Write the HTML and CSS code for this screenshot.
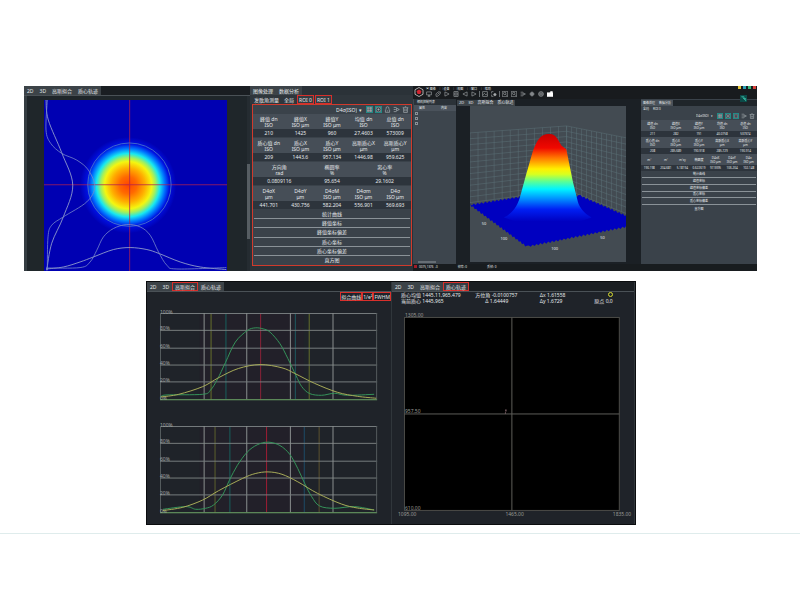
FILE: index.html
```
<!DOCTYPE html>
<html lang="zh-CN">
<head>
<meta charset="utf-8">
<meta name="viewport" content="width=device-width, initial-scale=1">
<title>光束分析</title>
<link rel="stylesheet" href="styles.css">
</head>
<body>
<svg class="defs" aria-hidden="true">
  <symbol id="i-grid" viewBox="0 0 10 10"><rect x="1.5" y="1.5" width="7" height="7"/><path d="M1.5 4h7M1.5 6.5h7M4 1.5v7M6.5 1.5v7"/></symbol>
  <symbol id="i-target" viewBox="0 0 10 10"><circle cx="5" cy="5" r="3.7"/><circle cx="5" cy="5" r="1" fill="currentColor"/></symbol>
  <symbol id="i-lock" viewBox="0 0 10 10"><path d="M3 5V3a2 2 0 0 1 4 0v2M2 5v4h6V5M4 7h2"/></symbol>
  <symbol id="i-export" viewBox="0 0 10 10"><path d="M1 2h4M1 5h3M1 8h4M5 3l4 2-4 2z"/></symbol>
  <symbol id="i-trash" viewBox="0 0 10 10"><path d="M1 2.5h8M4 1h2M2.3 2.5v6.7h5.4V2.5M4 4.5v3M6 4.5v3"/></symbol>
  <symbol id="i-screen" viewBox="0 0 10 10"><path d="M1 1.5h8v5H1zM5 6.5L3.5 9h3z"/></symbol>
  <symbol id="i-link" viewBox="0 0 10 10"><path d="M2 9L1.5 5 5 1.5h4L8.500 5 5 8.500zM4 6l3-3"/></symbol>
  <symbol id="i-play" viewBox="0 0 10 10"><path d="M1.500 1.500l7 3.500-7 3.500z"/></symbol>
  <symbol id="i-pause" viewBox="0 0 10 10"><path d="M1.500 1h7v8h-7zM5 1v8M3 3v4M7 3v4"/></symbol>
  <symbol id="i-back" viewBox="0 0 10 10"><path d="M8.500 1.500L1.500 5l7 3.500z"/></symbol>
  <symbol id="i-image" viewBox="0 0 10 10"><path d="M1 1h8v8H1zM1 7l3-3 2 2 1-1 2 2"/></symbol>
  <symbol id="i-corner" viewBox="0 0 10 10"><path d="M1 4V1h3M1 6v3h3"/><circle cx="6.500" cy="6" r="2" fill="currentColor"/></symbol>
  <symbol id="i-search" viewBox="0 0 10 10"><path d="M.5.500h9v9h-9z"/><circle cx="4.500" cy="4" r="2"/><path d="M6 5.500L8.500 8"/></symbol>
  <symbol id="i-gear" viewBox="0 0 10 10"><circle cx="5" cy="5" r="3"/><circle cx="5" cy="5" r="1.200"/><path d="M5 1v8M1 5h8"/></symbol>
  <symbol id="i-globe" viewBox="0 0 10 10"><circle cx="5" cy="5" r="4"/><path d="M3.500 1.500v7M6.500 1.500v7M1 5h8"/></symbol>
  <symbol id="i-camera" viewBox="0 0 10 10"><path d="M0 3h5l1-2h3v2l1 0v6H0z" fill="currentColor"/></symbol>
</svg>

<main>
<section class="row top">
  <article class="panel">
    <div class="bar"><nav class="tabs"><button>2D</button><button>3D</button><button>高斯拟合</button><button>质心轨迹</button></nav></div>
    <div class="beam">
      <svg viewBox="0 0 183 171" role="img" aria-label="光斑">
        <defs>
          <radialGradient id="heat" gradientUnits="userSpaceOnUse" cx="84" cy="85" r="48">
            <stop offset="0" stop-color="#ff4600"/><stop offset=".18" stop-color="#ff6a00"/><stop offset=".35" stop-color="#ffae00"/>
            <stop offset=".49" stop-color="#f4f610"/><stop offset=".57" stop-color="#a0f060"/><stop offset=".66" stop-color="#18e8f0"/>
            <stop offset=".76" stop-color="#0078ff"/><stop offset=".86" stop-color="#0010e0"/><stop offset="1" stop-color="#0000b2"/>
          </radialGradient>
        </defs>
        <rect width="183" height="171" fill="#0000b2"/>
        <circle cx="84" cy="85" r="48" fill="url(#heat)"/>
        <path d="M0 84.500H183M85.500 0V171" stroke="#b02050" stroke-width="1" opacity=".75"/>
        <g fill="none" stroke="#7686cc" stroke-width=".8">
          <circle cx="85.300" cy="84.500" r="41.600" stroke="#4e7cc8"/>
          <path stroke="#a0aed0" data-curve="2,0 4.3,20 17.7,52.7 28.7,85 19.3,116.7 7.7,143 2.7,170"/>
          <path data-curve="3.3,0 2,30 6.7,43.3 17.7,53.3 32.7,60 44.3,70 50.7,86.7 42.7,101.7 19.3,116.7 7.7,125 4,136.7 3.3,170"/>
          <path stroke="#a0aed0" data-curve="2,168.7 19.3,166.7 36,161.7 49.3,156.7 69.3,149.3 86,147.3 102.7,149.3 115,153.3 136,161.7 156,166.7 182,169.3"/>
          <path data-curve="2,167.7 36,167.3 46,161.7 52.7,150 59.3,136.7 69.3,128.3 82.7,124.3 96,126.7 106,135 114.3,151.7 122.7,165 132.7,168.7 182,167.3"/>
        </g>
      </svg>
      <i class="scroll"></i>
    </div>
  </article>

  <article class="panel data">
    <nav class="tabs"><button>图像处理</button><button>数据分析</button></nav>
    <nav class="tabs sub"><button>发散角测量</button><button>全局</button><button class="hot">ROI 0</button><button class="hot">ROI 1</button></nav>
    <div class="results framed">
      <div class="tools"><select aria-label="标准"><option>D4σ(ISO)</option></select><span class="caret">▾</span>
        <button class="on" aria-label="表格"><svg><use href="#i-grid"/></svg></button><button class="on" aria-label="定位"><svg><use href="#i-target"/></svg></button><button aria-label="锁定"><svg><use href="#i-lock"/></svg></button><button aria-label="导出"><svg><use href="#i-export"/></svg></button><button aria-label="删除"><svg><use href="#i-trash"/></svg></button></div>
      <table><thead><tr><th>峰值 dn<br>ISO</th><th>峰值X<br>ISO μm</th><th>峰值Y<br>ISO μm</th><th>均值 dn<br>ISO</th><th>总值 dn<br>ISO</th></tr></thead><tbody><tr><td>210</td><td>1425</td><td>960</td><td>27.4603</td><td>573009</td></tr></tbody></table>
      <table><thead><tr><th>质心值 dn<br>ISO</th><th>质心X<br>ISO μm</th><th>质心Y<br>ISO μm</th><th>高斯质心X<br>μm</th><th>高斯质心Y<br>μm</th></tr></thead><tbody><tr><td>209</td><td>1443.6</td><td>957.134</td><td>1446.98</td><td>959.625</td></tr></tbody></table>
      <table><thead><tr><th>方向角<br>rad</th><th>椭圆率<br>%</th><th>离心率<br>%</th></tr></thead><tbody><tr><td>0.0809116</td><td>95.654</td><td>29.1602</td></tr></tbody></table>
      <table><thead><tr><th>D4σX<br>μm</th><th>D4σY<br>μm</th><th>D4σM<br>ISO μm</th><th>D4σm<br>ISO μm</th><th>D4σ<br>ISO μm</th></tr></thead><tbody><tr><td>441.701</td><td>430.756</td><td>582.204</td><td>556.901</td><td>569.693</td></tr></tbody></table>
      <div class="list"><button>统计曲线</button><button>峰值坐标</button><button>峰值坐标偏差</button><button>质心坐标</button><button>质心坐标偏差</button><button>直方图</button></div>
    </div>
  </article>

  <article class="panel app">
    <header class="apphead">
      <svg class="logo" viewBox="0 0 10 10"><path d="M5 .5l4 2.200v4.600L5 9.500 1 7.300V2.700z" fill="#151719" stroke="#d8d0d0" stroke-width=".8"/><path d="M5 2.500L7.500 4 6.500 7h-3L2.500 4z" fill="#d02430"/></svg>
      <div class="headrows">
        <nav class="menu"><button>▣ 图像</button><button>▢ 设备</button><button>▢ 视图</button><button>▢ 窗口</button><button>▢ 帮助</button></nav>
        <div class="icons">
          <svg><use href="#i-screen"/></svg><svg><use href="#i-link"/></svg><svg><use href="#i-play"/></svg><svg><use href="#i-pause"/></svg><svg><use href="#i-back"/></svg><svg><use href="#i-play"/></svg><i></i>
          <svg><use href="#i-image"/></svg><svg><use href="#i-corner"/></svg><i></i>
          <svg><use href="#i-search"/></svg><svg><use href="#i-search"/></svg><svg><use href="#i-export"/></svg><svg><use href="#i-gear"/></svg><svg><use href="#i-globe"/></svg><svg class="bright"><use href="#i-camera"/></svg>
        </div>
      </div>
      <div class="dots"><i></i><i></i><i></i><i></i></div>
    </header>
    <div class="workspace">
      <aside class="side"><h2>相机控制列表</h2><div class="rowhead"><span>属性</span><span>内容</span></div>
        <div class="marks"><i></i><i></i><i></i></div><i class="hscroll"></i></aside>
      <div class="view">
        <nav class="tabs"><button>2D</button><button>3D</button><button>高斯拟合</button><button>质心轨迹</button></nav>
        <svg class="surface" viewBox="0 0 157 157" role="img" aria-label="三维光斑">
          <defs><linearGradient id="height" gradientUnits="userSpaceOnUse" x1="0" y1="28" x2="0" y2="116">
            <stop offset="0" stop-color="#c80000"/><stop offset=".16" stop-color="#f00800"/><stop offset=".27" stop-color="#ff7400"/><stop offset=".4" stop-color="#fff000"/><stop offset=".46" stop-color="#d8ff20"/><stop offset=".54" stop-color="#60ff90"/><stop offset=".63" stop-color="#00f4ff"/><stop offset=".74" stop-color="#0090ff"/><stop offset=".86" stop-color="#0020f4"/><stop offset="1" stop-color="#0000c0"/></linearGradient></defs>
          <rect width="157" height="157" fill="#434b52"/>
          <g id="walls" fill="none" stroke="#79a0a6" stroke-width=".5" opacity=".45"></g>
          <path id="floor" fill="#0000c0"/>
          <path fill="url(#height)" d="M34 112C45 106 48 98 50 92L56 70 62.700 46.700C65 40 68 32 73.300 29.300 76 28 80 27.700 83 28.500 87 30 89 35 92 40L96.700 43.300 103.300 76 108.300 96C110 102 114 107 122 112 108 117 92 120 78 119.500 62 119 48 117 34 112z"/>
          <g fill="#e4e8ea" font-size="4" text-anchor="middle"><text x="14" y="119">50</text><text x="34" y="135">100</text><text x="85" y="145">100</text><text x="133" y="134">50</text></g>
        </svg>
      </div>
      <div class="inspector">
        <nav class="tabs"><button>图像处理</button><button>数据分析</button></nav>
        <nav class="tabs sub"><button>全局</button><button>ROI 0</button></nav>
        <div class="results small">
          <div class="tools"><select aria-label="标准"><option>D4σ(ISO)</option></select><span class="caret">▾</span>
            <button class="on" aria-label="表格"><svg><use href="#i-grid"/></svg></button><button class="on" aria-label="定位"><svg><use href="#i-target"/></svg></button><button class="on" aria-label="锁定"><svg><use href="#i-lock"/></svg></button><button aria-label="导出"><svg><use href="#i-export"/></svg></button><button aria-label="删除"><svg><use href="#i-trash"/></svg></button></div>
          <table><thead><tr><th>峰值 dn<br>ISO</th><th>峰值X<br>ISO μm</th><th>峰值Y<br>ISO μm</th><th>均值 dn<br>ISO</th><th>总值 dn<br>ISO</th></tr></thead><tbody><tr><td>211</td><td>282</td><td>191</td><td>40.0758</td><td>537374</td></tr></tbody></table>
          <table><thead><tr><th>质心值 dn<br>ISO</th><th>质心X<br>ISO μm</th><th>质心Y<br>ISO μm</th><th>高斯质心X<br>μm</th><th>高斯质心Y<br>μm</th></tr></thead><tbody><tr><td>208</td><td>285.689</td><td>190.918</td><td>285.729</td><td>190.914</td></tr></tbody></table>
          <table><thead><tr><th>m²</th><th>m²</th><th>m²xy</th><th>椭圆度</th><th>D4σX<br>ISO μm</th><th>D4σY<br>ISO μm</th><th>D4σ<br>ISO μm</th></tr></thead><tbody><tr><td>190.198</td><td>204.681</td><td>5.18194</td><td>0.622619</td><td>97.9395</td><td>106.204</td><td>102.148</td></tr></tbody></table>
          <div class="list"><button>统计曲线</button><button>峰值坐标</button><button>峰值坐标偏差</button><button>质心坐标</button><button>质心坐标偏差</button><button>直方图</button></div>
        </div>
      </div>
    </div>
    <footer class="status"><b></b><span>0075,1376&nbsp; -0</span><span>帧率: 0</span><span>丢帧: 0</span></footer>
    <svg class="badge" viewBox="0 0 8 8"><rect width="8" height="8" fill="#0c4a48"/><path d="M1.500 2h3v2h2v3M3 3l3 3" fill="none" stroke="#35b8a0"/></svg>
  </article>
</section>

<section class="row bottom">
  <article class="panel fit">
    <div class="bar"><nav class="tabs"><button>2D</button><button>3D</button><button class="hot">高斯拟合</button><button>质心轨迹</button></nav></div>
    <div class="chips"><button>拟合曲线</button><button>1/e²</button><button>FWHM</button></div>
    <svg class="chart" viewBox="0 0 219 89" role="img" aria-label="X 拟合" data-marks="51,#66702c 66,#17605c 101,#8c2238 136,#1d5a60 150,#66702c">
      <path class="green" data-curve="1,85 6,82.7 43,82 51,77.7 58,66.7 66,50 76,29.3 88,17.7 96,15 104,16 111,19.3 121,31 129,46 137,62.7 143,74.3 151,81.3 163,83 176,81 189,83 216,82"/>
      <path class="yellow" data-curve="1,84.7 19,82 43,74.3 59,65.3 79,56 101,52 123,55.3 136,61 156,71 179,80 199,84 218,86"/>
    </svg>
    <svg class="chart" viewBox="0 0 219 89" role="img" aria-label="Y 拟合" data-marks="55,#5c602c 70,#17605c 107,#a01c34 145,#1d4a68 160,#5c5230">
      <path class="green" data-curve="3,84 26,81.3 36,84 46,83 54,79.7 63,69.7 70,54.7 78,39.7 88,26.3 98,19 109,16.3 121,19.7 131,28.7 139,43 146,58 153,71.3 161,80.7 176,83 196,81.3 216,84.7"/>
      <path class="yellow" data-curve="3,85.3 23,82 43,74.7 59,65.3 83,53 96,48 109,46.3 123,48.7 139,56.3 159,68 183,78.7 199,82.7 216,84.7"/>
    </svg>
  </article>
  <article class="panel track">
    <div class="bar"><nav class="tabs"><button>2D</button><button>3D</button><button>高斯拟合</button><button class="hot">质心轨迹</button></nav></div>
    <div class="info">
      <span>质心均值 1445.11,965.479</span><span>方位角 -0.0100757</span><span>Δx 1.61558</span><span class="ringcell"><i class="ring"></i></span>
      <span>当前质心 1445,965</span><span class="indent">Δ 1.64449</span><span>Δy 1.6729</span><span>原点 0,0</span>
    </div>
    <svg class="plot" viewBox="0 0 236 208" role="img" aria-label="质心轨迹">
      <rect x="7.500" y="5.500" width="216" height="194" fill="#000" stroke="#4c4c48"/>
      <path d="M115.500 5.500v194M7.500 102.500h216" stroke="#5e5e5a"/>
      <path d="M109.500 98v2M108.500 101.500h1" stroke="#b08890"/>
      <g fill="#9a9c98" font-size="5"><text x="8" y="5">1305.00</text><text x="8" y="102">957.50</text><text x="8" y="199">610.00</text><text x="1" y="205">1095.00</text><text x="109" y="205">1465.00</text><text x="217" y="205">1835.00</text></g>
    </svg>
  </article>
</section>
</main>
<hr>
<script src="script.js"></script>
</body>
</html>
```
FILE: styles.css
```
* { box-sizing: border-box; }
body { margin: 0; background: #fff; color: #e6eaec; font: 5px/6px "Noto Sans", "Noto Sans CJK SC", sans-serif; }
main { padding-top: 86px; }
.defs { display: block; width: 0; height: 0; position: absolute; }
svg { display: block; }
button, select { margin: 0; padding: 0; border: 0; background: none; color: inherit; font: inherit; appearance: none; white-space: nowrap; }
.row { display: grid; }
.top { margin: 0 43px 0 24px; grid-template-columns: 226fr 163fr 344fr; min-height: 185px; }
.bottom { margin: 10px 164px 0 146px; grid-template-columns: 246fr 244fr; border: 1px solid #0a0c0e; }
.panel { background: #1f262a; min-width: 0; display: flex; flex-direction: column; }
.bar { border-bottom: 1px solid #4a5156; background: #1a1e22; }
.tabs { display: flex; width: max-content; height: 9px; background: #3c4348; }
.tabs button { padding: 0 2px; border: 1px solid transparent; line-height: 6px; }
.tabs .hot { border-color: #d8302c; background: #343c42; }

.beam { flex: 1; display: flex; justify-content: space-between; align-items: flex-end; border-left: 3px solid #353d42; padding-left: 17px; }
.beam svg { width: 89%; margin-top: 4px; }
.scroll { width: 3px; align-self: stretch; background: linear-gradient(#252c31 39%, #565d62 39% 82%, #252c31 82%); }

.data { background: #2b3238; }
.data .sub { width: 100%; padding-left: 2px; background: #2f363c; gap: 1px; }
.data .sub button { padding: 0 1px; }
.results { background: #3a424a; }
.framed { border: 1px solid #d03a2c; margin: 0 1px 0 2px; }
.tools { display: flex; justify-content: flex-end; align-items: center; gap: 2px; height: 9px; padding-right: 2px; }
.tools button { width: 7px; height: 7px; color: #a4acb0; }
.tools .on { outline: 1px solid #238a86; outline-offset: -1px; }
.tools svg, .icons svg { width: 100%; height: 100%; fill: none; stroke: currentColor; }
.caret { margin-right: 2px; }
table { width: 100%; table-layout: fixed; border-collapse: collapse; margin-bottom: 1px; }
th { height: 15px; padding: 0; background: #464e57; font-weight: 400; white-space: nowrap; }
td { height: 8px; padding: 0; background: #2d343c; text-align: center; white-space: nowrap; }
.list { display: grid; grid-auto-rows: 1fr; height: 55px; padding: 0 1px; }
.list button { border-bottom: 1px solid #8a9298; }
.list button:last-child { border: 0; }

.app { background: #1a1e22; position: relative; }
.apphead { display: flex; height: 13px; padding-left: 1px; background: #181b1e; }
.logo { width: 10px; height: 10px; margin-top: 1px; }
.headrows { flex: 1; padding-left: 2px; }
.menu { display: flex; gap: 4px; font-size: 3px; line-height: 4px; height: 5px; }
.icons { display: flex; gap: 3px; height: 6px; color: #a8acae; }
.icons svg { width: 6px; height: 6px; }
.icons i { width: 1px; background: #666c70; margin: 0 -1px; }
.icons .bright { color: #fff; }
.dots { display: flex; gap: 2px; padding: 0 1px; }
.dots i { width: 3px; height: 3px; background: #e8c838; }
.dots i:nth-child(2) { background: #2aa0b4; }
.dots i:nth-child(3) { background: #38b878; }
.dots i:nth-child(4) { background: #d84038; }
.badge { position: absolute; right: 10px; top: 9px; width: 7px; height: 7px; }
.workspace { flex: 1; display: grid; grid-template-columns: 43fr 185fr 116fr; font-size: 4px; line-height: 5px; }
.side { background: #3d454d; padding-left: 1px; display: flex; flex-direction: column; }
.side h2 { margin: 0; padding-left: 3px; font: inherit; font-size: 3px; line-height: 6px; background: #2b3238; }
.rowhead { display: flex; gap: 16px; padding-left: 5px; background: #4a525b; font-size: 3px; line-height: 6px; }
.marks { display: grid; gap: 2px; padding: 1px; }
.marks i { width: 3px; height: 3px; border: 1px solid #8a9096; }
.hscroll { width: 18px; height: 2px; margin: auto 0 1px 4px; background: #666e75; }
.view { padding: 1px 14px 0 1px; display: flex; flex-direction: column; background: #1b2025; }
.view .tabs { height: 6px; }
.view .tabs button { line-height: 4px; padding: 0 1px; }
.surface { width: 92%; margin-left: 13px; }
.inspector { padding: 1px 0 0; background: #3a424a; }
.inspector .tabs { height: 6px; font-size: 3px; }
.inspector > .tabs:first-child { width: 100%; background: linear-gradient(90deg, #4a525a 28%, #1f252a 28%); }
.inspector .tabs button { line-height: 4px; padding: 0 1px; }
.inspector .sub { background: none; }
.small { font-size: 3px; line-height: 4px; }
.small .tools { height: 8px; gap: 2px; }
.small .tools button { width: 6px; height: 6px; }
.small th { height: 11px; }
.small td { height: 6px; }
.small table { margin: 0; }
.small .list { height: 41px; }
.status { display: flex; gap: 20px; height: 7px; padding-left: 1px; font-size: 3px; line-height: 6px; background: #181c1f; }
.status b { width: 3px; height: 3px; margin: 1px -18px 0 0; background: #a01c28; }

.fit, .track { border-right: 1px solid #30363b; }
.bottom .panel { background: #1f2329; padding-bottom: 5px; }
.chips { display: flex; justify-content: flex-end; height: 9px; }
.chips button { border: 1px solid #d8302c; line-height: 6px; }
.chart { width: 89%; margin: 12px 0 12px 13px; overflow: visible; }
.chart:last-child { margin-bottom: 0; }
.chart path { fill: none; stroke-width: 1; }
.chart .green { stroke: #35945a; }
.chart .yellow { stroke: #a8ac58; }
.info { display: grid; grid-template-columns: 75fr 65fr 55fr 40fr; padding-left: 9px; line-height: 6px; }
.info .indent { padding-left: 10px; }
.ringcell { padding: 0 14px; }
.ring { display: block; width: 5px; height: 5px; border: 1px solid #d8dc30; border-radius: 50%; }
.plot { width: 97%; margin: 8px 0 0 5px; overflow: visible; }
hr { margin: 8px 0 0; border: 0; border-top: 1px solid #dfecec; }
```
FILE: script.js
```
const NS = "http://www.w3.org/2000/svg";

// Adds an SVG child element to a parent.
function add(parent, name, attrs, text) {
  const el = document.createElementNS(NS, name);
  for (const key in attrs) el.setAttribute(key, attrs[key]);
  if (text) el.textContent = text;
  parent.appendChild(el);
  return el;
}

// Smooth curve through the sampled points.
document.querySelectorAll("[data-curve]").forEach(path => {
  const p = path.dataset.curve.split(" ").map(s => s.split(",").map(Number));
  let d = "M" + p[0];
  for (let i = 0; i < p.length - 1; i++) {
    const a = p[i - 1] || p[i], b = p[i], c = p[i + 1], e = p[i + 2] || c;
    d += "C" + [b[0] + (c[0] - a[0]) / 6, b[1] + (c[1] - a[1]) / 6, c[0] - (e[0] - b[0]) / 6, c[1] - (e[1] - b[1]) / 6, c[0], c[1]];
  }
  path.setAttribute("d", d);
});

// Chart grid, percentage labels and marker lines.
document.querySelectorAll(".chart").forEach(svg => {
  const g = document.createElementNS(NS, "g");
  svg.prepend(g);
  add(g, "rect", { x: 40, y: 0, width: 105, height: 87, fill: "#241f29", opacity: 0.7 });
  svg.dataset.marks.split(" ").forEach(m => {
    const [x, color] = m.split(",");
    add(g, "path", { d: `M${x}.5 0V87`, stroke: color });
  });
  for (let i = 0; i < 6; i++) {
    const y = Math.round(i * 17.3) + 0.5, x = Math.round(i * 43.6) + 0.5;
    add(g, "path", { d: `M0 ${y}H219`, stroke: i === 5 ? "#70a868" : "#777d7e" });
    add(g, "path", { d: `M${x} 0V87`, stroke: i === 0 || i === 5 ? "#555c5e" : "#8b9090" });
    add(g, "text", { x: 0, y: y, fill: "#a2a8a8", "font-size": 5 }, 100 - i * 20 + "%");
  }
});

// Back walls of the 3D view.
const walls = document.getElementById("walls");
for (let i = 0; i <= 12; i++) {
  const t = i / 12;
  add(walls, "path", { d: `M0 ${27 + t * 70}L97 ${20 + t * 64}L157 ${32 + t * 76}` });
  add(walls, "path", { d: `M${t * 97} ${27 - t * 7}V${97 - t * 13}` });
  add(walls, "path", { d: `M${97 + t * 60} ${20 + t * 12}V${84 + t * 24}` });
}

// Floor with a ragged noise edge.
const corners = [[0, 99], [50, 91], [111, 90], [157, 110], [157, 121], [57, 141]];
let outline = "";
corners.forEach((a, i) => {
  const b = corners[(i + 1) % corners.length];
  const n = Math.ceil(Math.hypot(b[0] - a[0], b[1] - a[1]) / 2);
  for (let k = 0; k < n; k++) {
    const x = a[0] + (b[0] - a[0]) * k / n;
    const y = a[1] + (b[1] - a[1]) * k / n + (k % 2 ? 1.2 : -0.6);
    outline += (outline ? "L" : "M") + x + " " + y;
  }
});
document.getElementById("floor").setAttribute("d", outline + "z");
```
